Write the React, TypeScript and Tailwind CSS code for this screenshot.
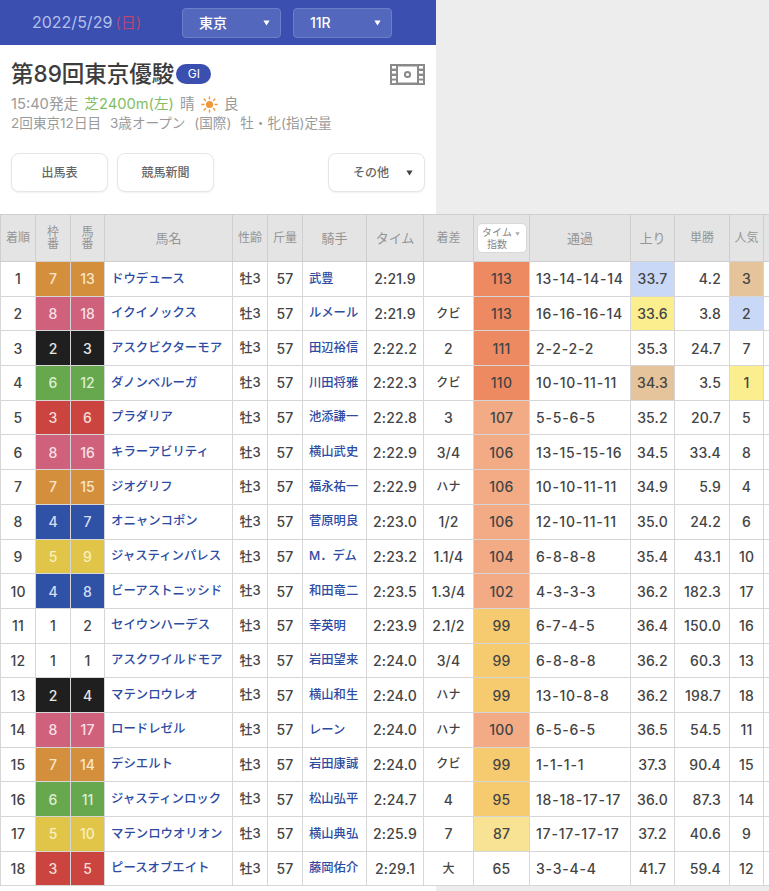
const font = { fontFamily: 'Inter, "Noto Sans CJK JP", "Liberation Sans", sans-serif' };

type Row = {
  pos: number;
  waku: number;
  num: number;
  name: string;
  jockey: string;
  time: string;
  diff: string;
  index: number;
  indexBg: string;
  pass: string;
  last: string;
  lastBg?: string;
  odds: string;
  pop: number;
  popBg?: string;
};

const wakuBg: Record<number, string> = {
  1: 'bg-white text-[#444]',
  2: 'bg-[#1f1f1f] text-[#e6e6e6]',
  3: 'bg-[#cb443f] text-[#f5dcd8]',
  4: 'bg-[#2f52a6] text-[#d6dff2]',
  5: 'bg-[#e0c548] text-[#f8efc0]',
  6: 'bg-[#67a84f] text-[#dcefd2]',
  7: 'bg-[#d48f3c] text-[#f9e6cb]',
  8: 'bg-[#cf617c] text-[#fae0e6]',
};

const rows: Row[] = [
  { pos: 1, waku: 7, num: 13, name: 'ドウデュース', jockey: '武豊', time: '2:21.9', diff: '', index: 113, indexBg: 'bg-[#ee8a62]', pass: '13-14-14-14', last: '33.7', lastBg: 'bg-[#c9d8f6]', odds: '4.2', pop: 3, popBg: 'bg-[#e6c49b]' },
  { pos: 2, waku: 8, num: 18, name: 'イクイノックス', jockey: 'ルメール', time: '2:21.9', diff: 'クビ', index: 113, indexBg: 'bg-[#ee8a62]', pass: '16-16-16-14', last: '33.6', lastBg: 'bg-[#fbee8f]', odds: '3.8', pop: 2, popBg: 'bg-[#c9d8f6]' },
  { pos: 3, waku: 2, num: 3, name: 'アスクビクターモア', jockey: '田辺裕信', time: '2:22.2', diff: '2', index: 111, indexBg: 'bg-[#ee8a62]', pass: '2-2-2-2', last: '35.3', odds: '24.7', pop: 7 },
  { pos: 4, waku: 6, num: 12, name: 'ダノンベルーガ', jockey: '川田将雅', time: '2:22.3', diff: 'クビ', index: 110, indexBg: 'bg-[#ee8a62]', pass: '10-10-11-11', last: '34.3', lastBg: 'bg-[#e6c49b]', odds: '3.5', pop: 1, popBg: 'bg-[#fbee8f]' },
  { pos: 5, waku: 3, num: 6, name: 'プラダリア', jockey: '池添謙一', time: '2:22.8', diff: '3', index: 107, indexBg: 'bg-[#f2ab85]', pass: '5-5-6-5', last: '35.2', odds: '20.7', pop: 5 },
  { pos: 6, waku: 8, num: 16, name: 'キラーアビリティ', jockey: '横山武史', time: '2:22.9', diff: '3/4', index: 106, indexBg: 'bg-[#f2ab85]', pass: '13-15-15-16', last: '34.5', odds: '33.4', pop: 8 },
  { pos: 7, waku: 7, num: 15, name: 'ジオグリフ', jockey: '福永祐一', time: '2:22.9', diff: 'ハナ', index: 106, indexBg: 'bg-[#f2ab85]', pass: '10-10-11-11', last: '34.9', odds: '5.9', pop: 4 },
  { pos: 8, waku: 4, num: 7, name: 'オニャンコポン', jockey: '菅原明良', time: '2:23.0', diff: '1/2', index: 106, indexBg: 'bg-[#f2ab85]', pass: '12-10-11-11', last: '35.0', odds: '24.2', pop: 6 },
  { pos: 9, waku: 5, num: 9, name: 'ジャスティンパレス', jockey: 'M．デム', time: '2:23.2', diff: '1.1/4', index: 104, indexBg: 'bg-[#f2ab85]', pass: '6-8-8-8', last: '35.4', odds: '43.1', pop: 10 },
  { pos: 10, waku: 4, num: 8, name: 'ビーアストニッシド', jockey: '和田竜二', time: '2:23.5', diff: '1.3/4', index: 102, indexBg: 'bg-[#f2ab85]', pass: '4-3-3-3', last: '36.2', odds: '182.3', pop: 17 },
  { pos: 11, waku: 1, num: 2, name: 'セイウンハーデス', jockey: '幸英明', time: '2:23.9', diff: '2.1/2', index: 99, indexBg: 'bg-[#f6cb70]', pass: '6-7-4-5', last: '36.4', odds: '150.0', pop: 16 },
  { pos: 12, waku: 1, num: 1, name: 'アスクワイルドモア', jockey: '岩田望来', time: '2:24.0', diff: '3/4', index: 99, indexBg: 'bg-[#f6cb70]', pass: '6-8-8-8', last: '36.2', odds: '60.3', pop: 13 },
  { pos: 13, waku: 2, num: 4, name: 'マテンロウレオ', jockey: '横山和生', time: '2:24.0', diff: 'ハナ', index: 99, indexBg: 'bg-[#f6cb70]', pass: '13-10-8-8', last: '36.2', odds: '198.7', pop: 18 },
  { pos: 14, waku: 8, num: 17, name: 'ロードレゼル', jockey: 'レーン', time: '2:24.0', diff: 'ハナ', index: 100, indexBg: 'bg-[#f2ab85]', pass: '6-5-6-5', last: '36.5', odds: '54.5', pop: 11 },
  { pos: 15, waku: 7, num: 14, name: 'デシエルト', jockey: '岩田康誠', time: '2:24.0', diff: 'クビ', index: 99, indexBg: 'bg-[#f6cb70]', pass: '1-1-1-1', last: '37.3', odds: '90.4', pop: 15 },
  { pos: 16, waku: 6, num: 11, name: 'ジャスティンロック', jockey: '松山弘平', time: '2:24.7', diff: '4', index: 95, indexBg: 'bg-[#f6cb70]', pass: '18-18-17-17', last: '36.0', odds: '87.3', pop: 14 },
  { pos: 17, waku: 5, num: 10, name: 'マテンロウオリオン', jockey: '横山典弘', time: '2:25.9', diff: '7', index: 87, indexBg: 'bg-[#f8e293]', pass: '17-17-17-17', last: '37.2', odds: '40.6', pop: 9 },
  { pos: 18, waku: 3, num: 5, name: 'ピースオブエイト', jockey: '藤岡佑介', time: '2:29.1', diff: '大', index: 65, indexBg: 'bg-white', pass: '3-3-4-4', last: '41.7', odds: '59.4', pop: 12 },
];

const widths = [35, 35, 34, 128, 35, 35, 64, 57, 50, 56, 101, 44, 55, 34, 6];

function Caret({ className }: { className: string }) {
  return (
    <svg viewBox="0 0 10 8" className={className} fill="currentColor">
      <path d="M0.5 0.5h9L5 7.5z" />
    </svg>
  );
}

function Film() {
  return (
    <svg viewBox="0 0 35 21" className="w-[35px] h-[21px]" fill="none">
      <rect x="0" y="0" width="35" height="21" fill="#8a8a8a" />
      <rect x="8" y="2.5" width="19" height="16" fill="#fff" />
      {[2, 7, 12, 16.5].map((y) => (
        <g key={y}>
          <rect x="2" y={y} width="4" height="2.6" fill="#fff" />
          <rect x="29" y={y} width="4" height="2.6" fill="#fff" />
        </g>
      ))}
      <circle cx="17.5" cy="10.5" r="2.6" stroke="#8a8a8a" strokeWidth="2" />
    </svg>
  );
}

function Sun() {
  return (
    <svg viewBox="0 0 18 18" className="w-[17px] h-[17px] inline-block" stroke="#f0973a" strokeWidth="1.5" strokeLinecap="round">
      <circle cx="9" cy="9" r="3.8" fill="#f0973a" stroke="none" />
      <path d="M9 1v2M9 15v2M1 9h2M15 9h2M3.3 3.3l1.4 1.4M13.3 13.3l1.4 1.4M3.3 14.7l1.4-1.4M13.3 4.7l1.4-1.4" />
    </svg>
  );
}

function Select({ label }: { label: string }) {
  return (
    <div className="flex items-center justify-between w-[99px] h-[30px] pl-4 pr-[10px] rounded-[4px] border border-[#6b7fc9] bg-[#5367bd] text-white text-[14px] font-medium">
      <span>{label}</span>
      <Caret className="w-[7px] h-[6px]" />
    </div>
  );
}

function Button({ label, width }: { label: string; width: string }) {
  return (
    <div className={`flex items-center justify-center h-[39px] rounded-lg border border-[#e6e6e6] bg-white text-[12px] font-medium text-[#666] shadow-[0_1px_2px_rgba(0,0,0,0.06)] ${width}`}>
      {label}
    </div>
  );
}

const th = 'border border-[#cfcfcf] bg-[#e4e4e4] text-[#959595] font-normal leading-[12px] text-center p-0';
const td = 'border border-[#d6d6d6] font-medium whitespace-nowrap overflow-hidden p-0';
const num = 'text-[14px] text-[#444] text-center tracking-[0.2px]';
const link = 'text-left pl-[6px] text-[#2d4ba3] tracking-normal';

export default function App() {
  return (
    <div className="w-[769px] h-[891px] bg-[#ededed] overflow-hidden" style={font}>
      <div className="w-[436px] h-[214px] bg-white">
        <div className="flex items-center h-[45px] bg-[#3a4fb0] pl-8">
          <div className="w-[150px] text-[16px] text-[#b4c0ec] whitespace-nowrap">
            2022/5/29<span className="text-[#b8476f] text-[15px] ml-[3px]">(日)</span>
          </div>
          <div className="flex gap-3">
            <Select label="東京" />
            <Select label="11R" />
          </div>
        </div>
        <div className="px-[11px] pt-[17px]">
          <div className="flex items-center justify-between h-[24px]">
            <div className="flex items-center gap-[2px]">
              <span className="text-[22.5px] font-medium text-[#3d3d3d] leading-[24px] whitespace-nowrap">第89回東京優駿</span>
              <span className="flex items-center justify-center w-[35px] h-[20px] rounded-full bg-[#3a4fb0] text-white text-[12px]">GI</span>
            </div>
            <Film />
          </div>
          <div className="flex items-center gap-[6px] mt-[9px] h-[18px] text-[14.7px] text-[#9a9a9a] whitespace-nowrap">
            <span>15:40発走</span>
            <span className="text-[#82bd63]">芝2400m(左)</span>
            <span>晴</span>
            <Sun />
            <span>良</span>
          </div>
          <div className="mt-[1px] h-[18px] text-[13.6px] leading-[18px] text-[#9a9a9a] whitespace-nowrap [word-spacing:5px]">
            2回東京12日目 3歳オープン (国際) 牡・牝(指)定量
          </div>
          <div className="flex items-center justify-between mt-[21px]">
            <div className="flex gap-[9px]">
              <Button label="出馬表" width="w-[97px]" />
              <Button label="競馬新聞" width="w-[97px]" />
            </div>
            <div className="flex items-center justify-between w-[97px] h-[39px] pl-6 pr-[11px] rounded-lg border border-[#e6e6e6] bg-white text-[12px] font-medium text-[#666] shadow-[0_1px_2px_rgba(0,0,0,0.06)]">
              <span>その他</span>
              <Caret className="w-[7px] h-[6px] text-[#444]" />
            </div>
          </div>
        </div>
      </div>
      <table className="table-fixed border-collapse bg-white w-[769px]">
        <colgroup>
          {widths.map((w, i) => (
            <col key={i} style={{ width: w }} />
          ))}
        </colgroup>
        <thead>
          <tr className="h-[47px]">
            <th className={`${th} text-[12px]`}>着順</th>
            <th className={`${th} text-[12px]`}><span className="inline-block w-[12px]">枠番</span></th>
            <th className={`${th} text-[12px]`}><span className="inline-block w-[12px]">馬番</span></th>
            <th className={`${th} text-[13px]`}>馬名</th>
            <th className={`${th} text-[12px]`}>性齢</th>
            <th className={`${th} text-[12px]`}>斤量</th>
            <th className={`${th} text-[13px]`}>騎手</th>
            <th className={`${th} text-[13px]`}>タイム</th>
            <th className={`${th} text-[12px]`}>着差</th>
            <th className={`${th} text-[10px]`}>
              <div className="flex items-center justify-center w-[50px] h-[30px] mx-auto rounded-[5px] border border-[#d8d8d8] bg-white text-[#888]">
                <span className="inline-block w-[30px]">タイム指数</span>
                <Caret className="w-[7px] h-[4px] ml-[2px] mb-2 text-[#aaa]" />
              </div>
            </th>
            <th className={`${th} text-[13px]`}>通過</th>
            <th className={`${th} text-[13px]`}>上り</th>
            <th className={`${th} text-[12px]`}>単勝</th>
            <th className={`${th} text-[12px]`}>人気</th>
            <th className={th}></th>
          </tr>
        </thead>
        <tbody>
          {rows.map((r) => (
            <tr key={r.pos} className="h-[34.7px]">
              <td className={`${td} ${num}`}>{r.pos}</td>
              <td className={`${td} text-[14px] text-center ${wakuBg[r.waku]}`}>{r.waku}</td>
              <td className={`${td} text-[14px] text-center ${wakuBg[r.waku]}`}>{r.num}</td>
              <td className={`${td} ${link} text-[12.4px]`}>{r.name}</td>
              <td className={`${td} text-[13px] text-[#444] text-center`}>牡3</td>
              <td className={`${td} ${num}`}>57</td>
              <td className={`${td} ${link} text-[12.3px]`}>{r.jockey}</td>
              <td className={`${td} ${num}`}>{r.time}</td>
              <td className={`${td} text-center text-[#444] tracking-[0.2px] ${/^[\d.\/]+$/.test(r.diff) ? 'text-[14px]' : 'text-[12px]'}`}>{r.diff}</td>
              <td className={`${td} ${num} ${r.indexBg}`}>{r.index}</td>
              <td className={`${td} text-[14px] text-[#444] text-left pl-[6px] tracking-[0.8px]`}>{r.pass}</td>
              <td className={`${td} ${num} ${r.lastBg ?? ''}`}>{r.last}</td>
              <td className={`${td} text-[14px] text-[#444] text-right pr-2 tracking-[0.2px]`}>{r.odds}</td>
              <td className={`${td} ${num} ${r.popBg ?? ''}`}>{r.pop}</td>
              <td className={td}></td>
            </tr>
          ))}
        </tbody>
      </table>
      <div className="w-[436px] h-[10px] bg-white"></div>
    </div>
  );
}
